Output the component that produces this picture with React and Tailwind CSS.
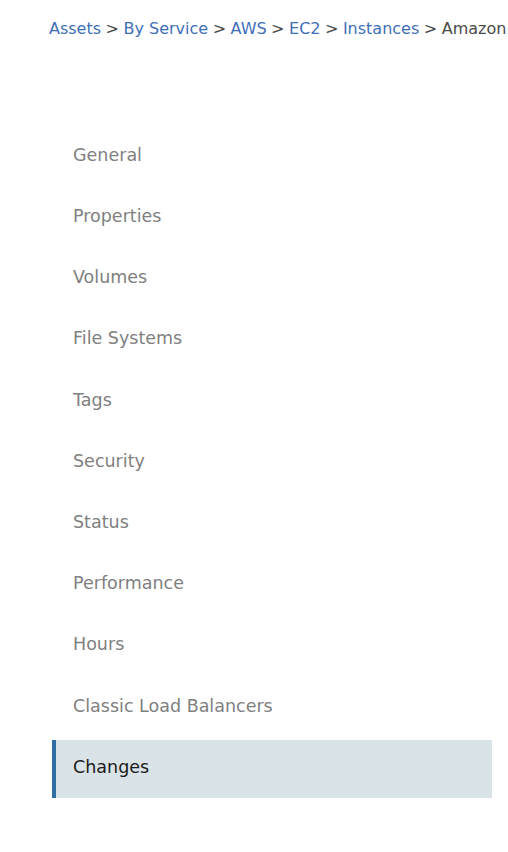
const crumbs = ["Assets", "By Service", "AWS", "EC2", "Instances"];

const items = [
  "General",
  "Properties",
  "Volumes",
  "File Systems",
  "Tags",
  "Security",
  "Status",
  "Performance",
  "Hours",
  "Classic Load Balancers",
  "Changes",
];

export default function App() {
  const active = "Changes";
  return (
    <div className="min-h-screen bg-white font-['DejaVu_Sans',sans-serif]">
      <div className="h-14 pt-px pl-[49px] leading-[55px] whitespace-nowrap overflow-hidden text-[16px]">
        {crumbs.map((c) => (
          <span key={c}>
            <a className="text-[#3f6fb8]">{c}</a>
            <span className="mx-[4.5px] text-[#4a4a4a]">&gt;</span>
          </span>
        ))}
        <span className="text-[#4a4a4a]">Amazon</span>
      </div>

      <nav className="mt-[72px] ml-[52px] w-[440px] flex flex-col gap-[3.2px]">
        {items.map((it) =>
          it === active ? (
            <div
              key={it}
              className="h-[58px] flex items-center pb-1 pl-[17px] border-l-4 border-[#2f6fa3] bg-[#dae3e8] text-[17.5px] text-[#1b1b1b]"
            >
              {it}
            </div>
          ) : (
            <div
              key={it}
              className="h-[58px] flex items-center pb-1 pl-[21px] text-[17.5px] text-[#808080]"
            >
              {it}
            </div>
          )
        )}
      </nav>
    </div>
  );
}
